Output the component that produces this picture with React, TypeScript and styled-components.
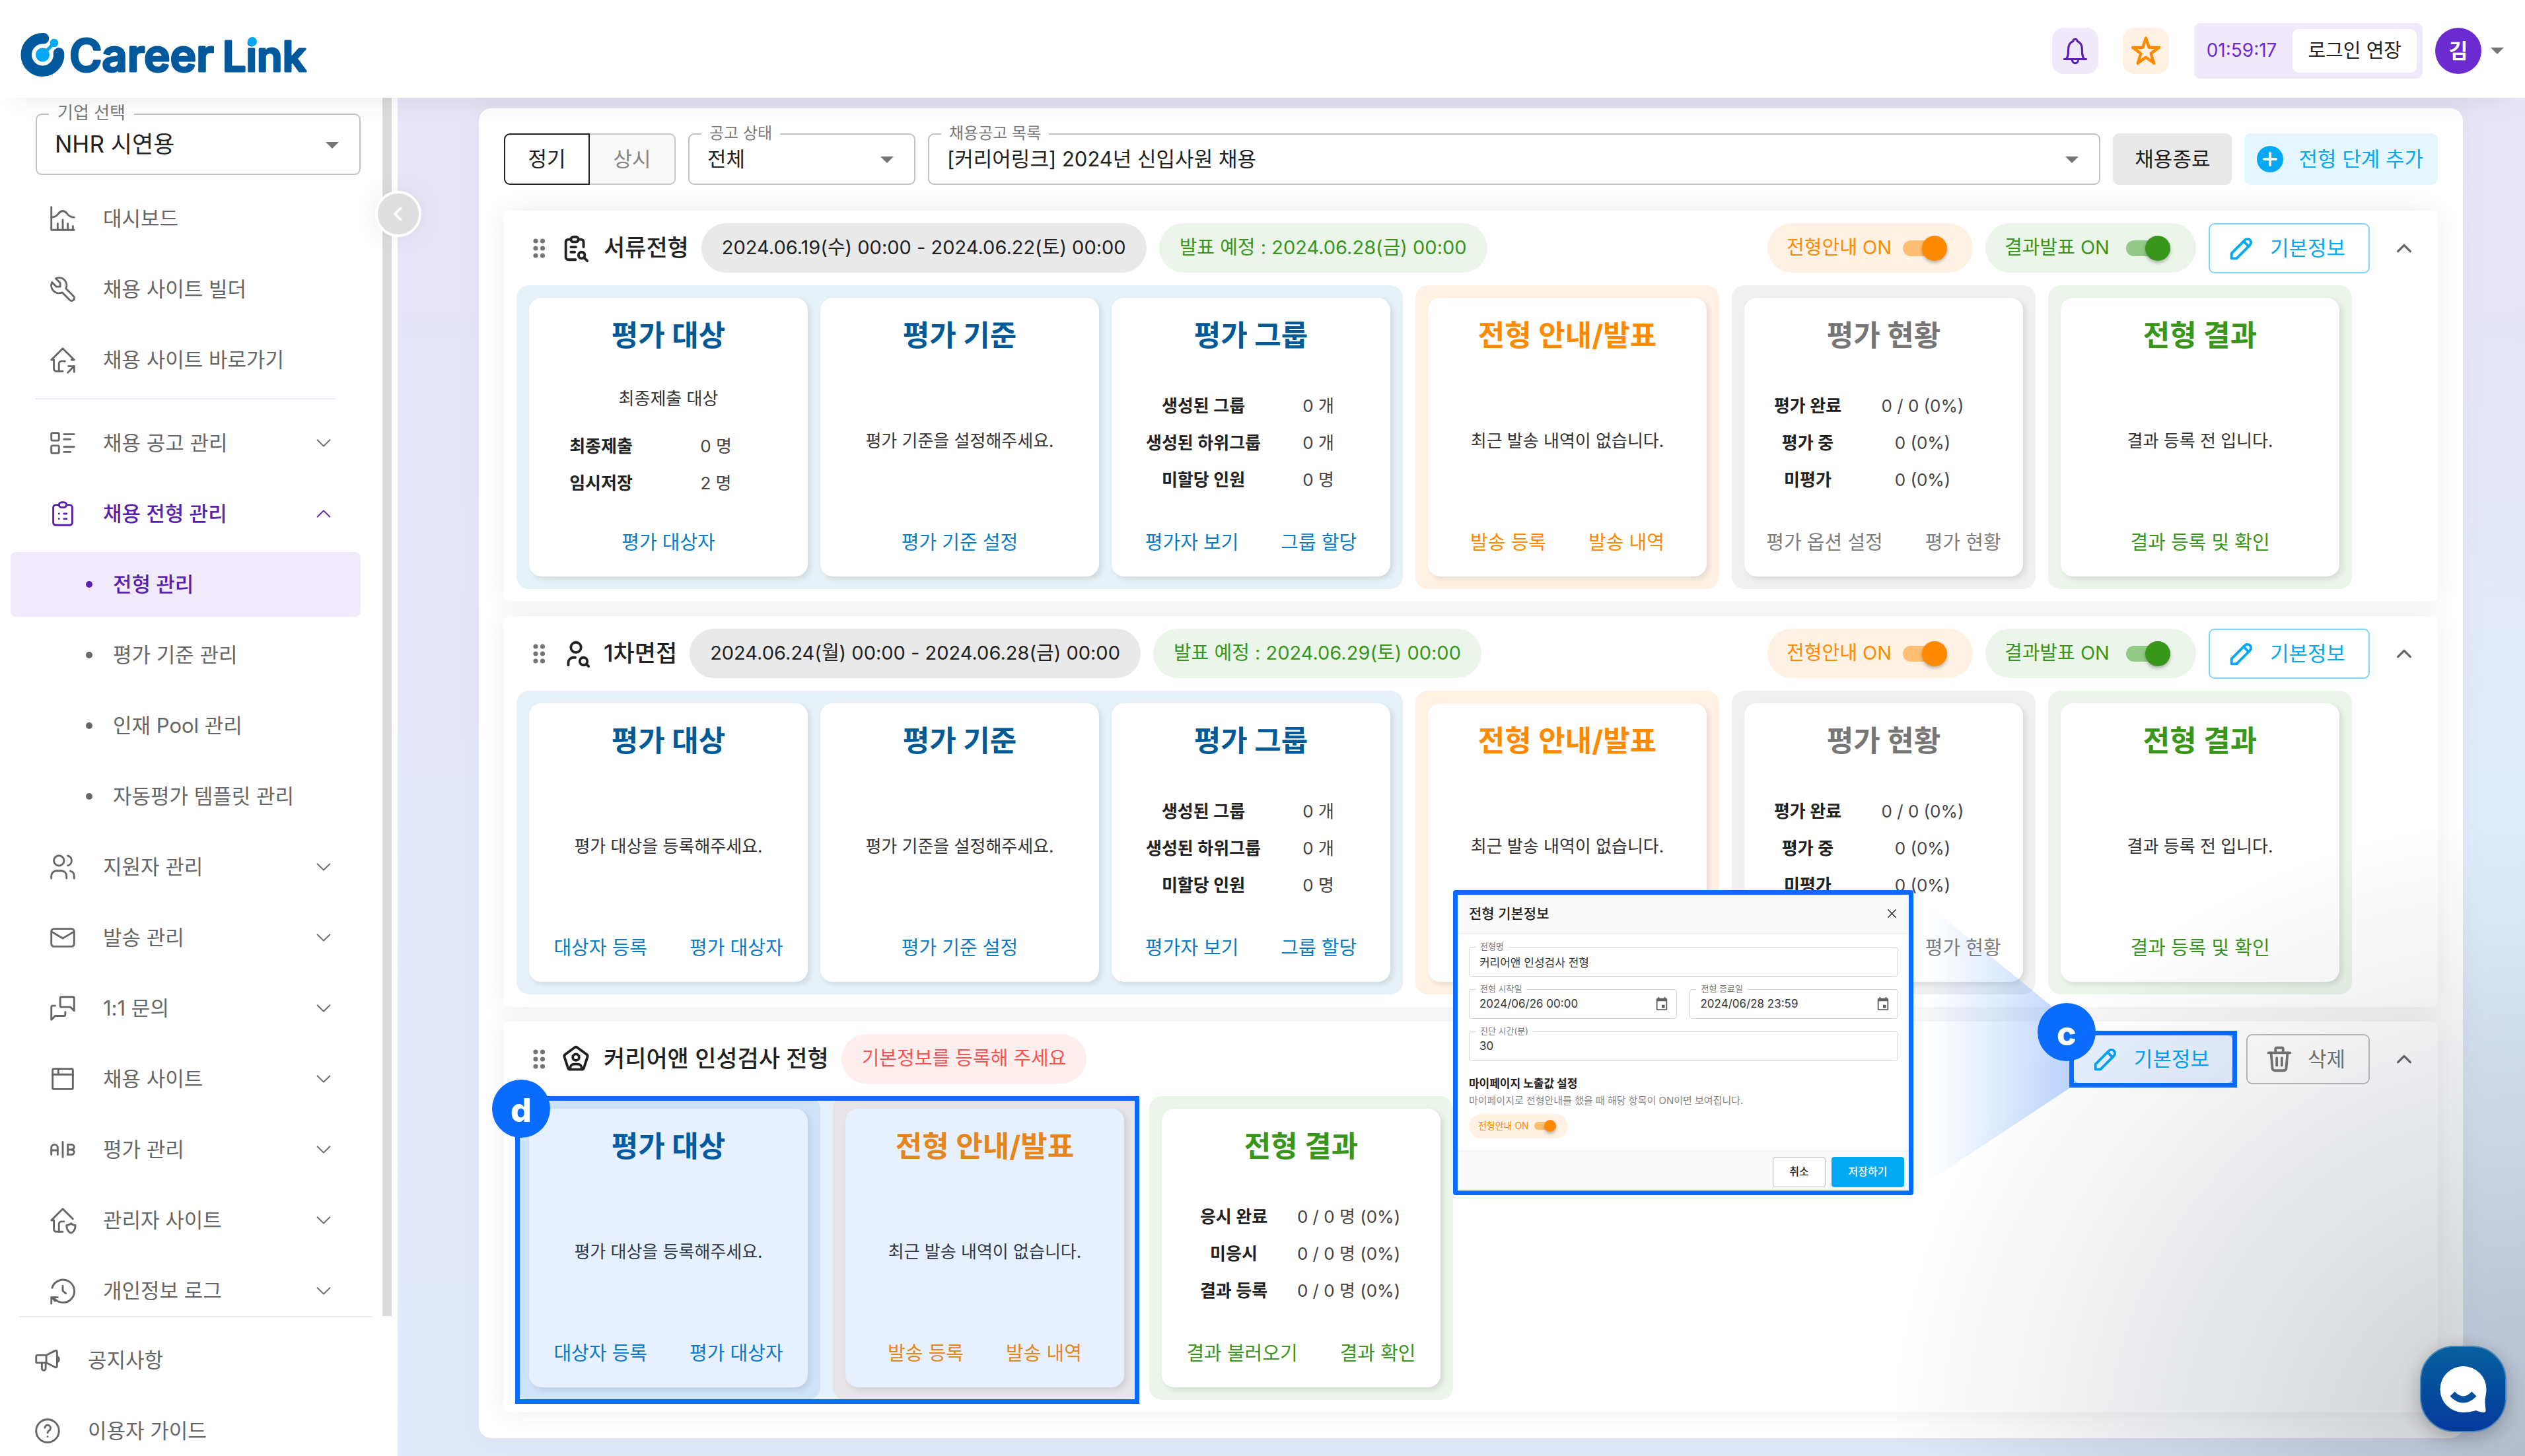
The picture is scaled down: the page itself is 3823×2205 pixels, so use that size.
import React from "react";
import styled, { createGlobalStyle, css } from "styled-components";

const GlobalStyle = createGlobalStyle`
  *, *::before, *::after { box-sizing: border-box; }
  body {
    margin: 0;
    font-family: Inter, "Noto Sans CJK KR", sans-serif;
    line-height: 1.4;
    color: #212121;
    background: #fff;
  }
  button, input, select { font: inherit; color: inherit; margin: 0; }
  button { background: none; border: 0; padding: 0; cursor: pointer; white-space: nowrap; }
  a { color: inherit; text-decoration: none; }
  ul { list-style: none; margin: 0; padding: 0; }
  h1, h2, h3, p { margin: 0; }
`;

/* ---------- icons ---------- */

const PATHS: Record<string, string[]> = {
  chart: ["M3 3v18h18", "M20 18v3", "M16 16v5", "M12 13v8", "M8 16v5", "M3 11c6 0 5-5 9-5s3 5 9 5"],
  tool: ["M7 10h3V7L6.500 3.500a6 6 0 0 1 8 8l6 6a2 2 0 0 1-3 3l-6-6a6 6 0 0 1-8-8L7 10"],
  homeShare: [
    "M9 21v-6a2 2 0 0 1 2-2h2c.25 0 .48.05.7.13",
    "M19 12h2l-9-9-9 9h2v7a2 2 0 0 0 2 2h5",
    "M16 22l5-5",
    "M21 21.500V17h-4.500",
  ],
  list: [
    "M13 5h8", "M13 9h5", "M13 15h8", "M13 19h5",
    "M3 5a1 1 0 0 1 1-1h4a1 1 0 0 1 1 1v4a1 1 0 0 1-1 1H4a1 1 0 0 1-1-1z",
    "M3 15a1 1 0 0 1 1-1h4a1 1 0 0 1 1 1v4a1 1 0 0 1-1 1H4a1 1 0 0 1-1-1z",
  ],
  clipboard: [
    "M9 5H6.500a2 2 0 0 0-2 2v12a2 2 0 0 0 2 2h11a2 2 0 0 0 2-2V7a2 2 0 0 0-2-2H15",
    "M9 5a2 2 0 0 1 2-2h2a2 2 0 0 1 2 2 2 2 0 0 1-2 2h-2a2 2 0 0 1-2-2z",
    "M9 12h.01", "M13 12h2", "M9 16h.01", "M13 16h2",
  ],
  users: [
    "M5 7a4 4 0 1 0 8 0a4 4 0 1 0-8 0",
    "M3 21v-2a4 4 0 0 1 4-4h4a4 4 0 0 1 4 4v2",
    "M16 3.130a4 4 0 0 1 0 7.750",
    "M21 21v-2a4 4 0 0 0-3-3.850",
  ],
  mail: ["M3 7a2 2 0 0 1 2-2h14a2 2 0 0 1 2 2v10a2 2 0 0 1-2 2H5a2 2 0 0 1-2-2z", "M3.500 7.500L12 12.500l8.500-5"],
  messages: [
    "M21 14l-3-3h-7a1 1 0 0 1-1-1V4a1 1 0 0 1 1-1h9a1 1 0 0 1 1 1z",
    "M14 15v2a1 1 0 0 1-1 1H6l-3 3V11a1 1 0 0 1 1-1h2",
  ],
  window: ["M4 5a1 1 0 0 1 1-1h14a1 1 0 0 1 1 1v14a1 1 0 0 1-1 1H5a1 1 0 0 1-1-1z", "M4 8.500h16", "M8.500 4v4"],
  ab: [
    "M3 16v-5.500a2.500 2.500 0 0 1 5 0V16",
    "M3 12.500h5",
    "M12 6v12",
    "M16 16V8h3a2 2 0 0 1 0 4h-3",
    "M19 12a2 2 0 0 1 0 4h-3",
  ],
  homeShield: [
    "M9 21v-6a2 2 0 0 1 2-2h2",
    "M20 11l-8-8-9 9h2v7a2 2 0 0 0 2 2h5",
    "M22 16c0 4-2.500 6-3.500 6S15 20 15 16c1 0 2.500-.500 3.500-1.500 1 1 2.500 1.500 3.500 1.500z",
  ],
  history: ["M12 8v4l2.500 2", "M3.600 9.500A9 9 0 1 1 5 17.600", "M3 22v-5h5", "M3.200 17.200L6 20"],
  speaker: [
    "M3 9a1 1 0 0 1 1-1h7v6H4a1 1 0 0 1-1-1z",
    "M11 8l7-3.500a1 1 0 0 1 1.500 1v11a1 1 0 0 1-1.500 1L11 14",
    "M19.500 9a2.400 2.400 0 0 1 0 4.500",
    "M7.500 14v4.500a1.500 1.500 0 0 0 3 0V14",
  ],
  help: ["M3 12a9 9 0 1 0 18 0a9 9 0 1 0-18 0", "M12 16.500v.01", "M9.800 9.500a2.300 2.300 0 1 1 3.400 2.200c-.800.500-1.200.900-1.200 1.800"],
  clipboardSearch: [
    "M8 5H6a2 2 0 0 0-2 2v12a2 2 0 0 0 2 2h5.700",
    "M18 11V7a2 2 0 0 0-2-2h-2",
    "M8 5a2 2 0 0 1 2-2h2a2 2 0 0 1 2 2 2 2 0 0 1-2 2h-2a2 2 0 0 1-2-2z",
    "M8 11h4", "M8 15h3",
    "M14 17.500a2.500 2.500 0 1 0 5 0a2.500 2.500 0 1 0-5 0",
    "M18.500 19.500L21 22",
  ],
  userSearch: [
    "M8 7a4 4 0 1 0 8 0a4 4 0 1 0-8 0",
    "M6 21v-2a4 4 0 0 1 4-4h1.500",
    "M15 18a3 3 0 1 0 6 0a3 3 0 1 0-6 0",
    "M20.200 20.200L22 22",
  ],
  userPentagon: [
    "M13.160 2.900l7.170 5.240c.700.510 1 1.430.730 2.260l-2.740 8.430a1.950 1.950 0 0 1-1.860 1.350H7.540a1.950 1.950 0 0 1-1.860-1.350L2.940 10.400a1.980 1.980 0 0 1 .730-2.260l7.170-5.240a1.970 1.970 0 0 1 2.320 0z",
    "M9.500 10.500a2.500 2.500 0 1 0 5 0a2.500 2.500 0 1 0-5 0",
    "M7.500 20v-1a3 3 0 0 1 3-3h3a3 3 0 0 1 3 3v1",
  ],
  pencil: ["M4 20h4L18.500 9.500a2.830 2.830 0 1 0-4-4L4 16z", "M13.500 6.500l4 4"],
  trash: ["M3.500 7h17", "M10 11v6", "M14 11v6", "M5.500 7l1 12a2 2 0 0 0 2 2h7a2 2 0 0 0 2-2l1-12", "M9 7V4a1 1 0 0 1 1-1h4a1 1 0 0 1 1 1v3"],
  down: ["M5 8.500l7 7 7-7"],
  up: ["M5 15.500l7-7 7 7"],
  left: ["M15 5l-7 7 7 7"],
  close: ["M4 4l16 16", "M20 4L4 20"],
  star: ["M12 3l2.200 6.700h7l-5.700 4.200 2.200 6.800L12 16.500l-5.700 4.200 2.200-6.800-5.700-4.200h7z"],
  bell: ["M4 18h16", "M5.500 18c1.500-2 1.500-4 1.500-7 0-4 2-5.500 3.500-6a1.500 1.500 0 0 1 3 0C15 5.500 17 7 17 11c0 3 0 5 1.500 7", "M9.800 18.500a2.200 2.500 0 0 0 4.400 0"],
};

const Icon = ({ name, size = 46, stroke = 1.5 }: { name: string; size?: number; stroke?: number }) => (
  <svg
    width={size}
    height={size}
    viewBox="0 0 24 24"
    fill="none"
    stroke="currentColor"
    strokeWidth={stroke}
    strokeLinecap="round"
    strokeLinejoin="round"
    aria-hidden="true"
  >
    {PATHS[name].map((d) => (
      <path key={d} d={d} />
    ))}
  </svg>
);

const Caret = styled.span`
  flex: none;
  width: 0;
  height: 0;
  border: 10px solid transparent;
  border-top-color: #757575;
  border-bottom: 0;
`;

/* ---------- header ---------- */

const Header = styled.header`
  position: relative;
  z-index: 3;
  display: flex;
  align-items: center;
  flex: none;
  height: 148px;
  padding: 6px 32px 0 30px;
  background: #fff;
  box-shadow: 0 30px 40px -30px rgba(0, 0, 0, 0.11);
`;

const LogoLink = styled.a`
  display: block;
  margin-right: auto;
  line-height: 0;
`;

const HeaderTools = styled.div`
  display: flex;
  align-items: center;
  gap: 19px;
`;

const SquareButtons = styled.div`
  display: flex;
  gap: 37px;
  margin-right: 19px;
`;

const SquareButton = styled.button<{ $bg: string; $fg: string }>`
  display: grid;
  place-items: center;
  width: 70px;
  height: 70px;
  border-radius: 18px;
  background: ${(p) => p.$bg};
  color: ${(p) => p.$fg};
`;

const Session = styled.div`
  display: flex;
  align-items: center;
  gap: 24px;
  height: 84px;
  padding: 0 9px 0 19px;
  border-radius: 9px;
  background: #f0e9fa;
  color: #6c2bd4;
  font-size: 28px;
`;

const ExtendButton = styled.button`
  height: 66px;
  padding: 0 23px;
  border-radius: 9px;
  background: #fff;
  color: #212121;
  font-size: 29px;
`;

const Account = styled.button`
  display: flex;
  align-items: center;
  gap: 14px;
`;

const Avatar = styled.span`
  display: grid;
  place-items: center;
  width: 70px;
  height: 70px;
  border-radius: 50%;
  background: #6b2bd0;
  color: #fff;
  font-size: 31px;
  font-weight: 700;
`;

/* ---------- sidebar ---------- */

const Shell = styled.div`
  display: flex;
  flex-direction: column;
  height: 100vh;
  overflow: hidden;

  svg { flex: none; }
`;

const Columns = styled.div`
  display: flex;
  flex: 1;
  min-height: 0;
`;

const Sidebar = styled.aside`
  position: relative;
  z-index: 2;
  display: flex;
  flex-direction: column;
  flex: none;
  width: 602px;
  background: #fff;
`;

const NavScroll = styled.div`
  flex: 1;
  min-height: 0;
  overflow: hidden;
  margin-right: 9px;
  padding: 24px 33px 0 16px;
  border-right: 14px solid #dcdcdc;
`;

const NavList = styled.ul`
  display: flex;
  flex-direction: column;
  gap: 9px;
`;

const navRow = css<{ $active?: boolean }>`
  display: flex;
  align-items: center;
  width: 100%;
  height: 98px;
  border-radius: 8px;
  font-size: 31px;
  text-align: left;
  color: ${(p) => (p.$active ? "#5a1fb0" : "#666")};
`;

const NavButton = styled.button<{ $active?: boolean }>`
  ${navRow}
  gap: 38px;
  padding: 0 40px 0 56px;
  font-weight: ${(p) => (p.$active ? 500 : 400)};

  & > svg:last-child { margin-left: auto; }
`;

const NavLink = styled.a<{ $compact?: boolean }>`
  ${navRow}
  gap: 38px;
  padding: 0 0 0 ${(p) => (p.$compact ? 19 : 56)}px;
`;

const SubLink = styled.a<{ $active?: boolean }>`
  ${navRow}
  gap: 31px;
  padding-left: 114px;
  font-weight: ${(p) => (p.$active ? 500 : 400)};
  background: ${(p) => (p.$active ? "#f1eafb" : "none")};

  &::before {
    content: "";
    width: 10px;
    height: 10px;
    border-radius: 50%;
    background: currentColor;
  }
`;

const NavDivider = styled.li`
  height: 2px;
  margin: 0 38px 8px;
  background: #efebfb;
`;

const SidebarFoot = styled.ul`
  display: flex;
  flex-direction: column;
  gap: 9px;
  height: 212px;
  margin: 0 38px 0 30px;
  padding: 16px 0 0;
  border-top: 2px solid #efebfb;
`;

const CollapseButton = styled.button`
  position: absolute;
  top: 141px;
  right: -36px;
  display: grid;
  place-items: center;
  width: 70px;
  height: 70px;
  border: 4px solid #fff;
  border-radius: 50%;
  background: #dedede;
  color: #fff;
  box-shadow: 0 0 38px rgba(0, 0, 0, 0.08);
`;

/* ---------- outlined fields ---------- */

const FieldBox = styled.div<{ $grow?: boolean; $width?: number; $h: number; $edge: string; $radius?: number }>`
  position: relative;
  display: flex;
  align-items: center;
  flex: ${(p) => (p.$grow ? "1" : "none")};
  width: ${(p) => (p.$width ? `${p.$width}px` : "auto")};
  min-width: 0;
  height: ${(p) => p.$h}px;
  border: 2px solid ${(p) => p.$edge};
  border-radius: ${(p) => p.$radius ?? 9}px;
  background: #fff;
`;

const FieldLabel = styled.label<{ $size: number; $left: number }>`
  position: absolute;
  top: 0;
  left: ${(p) => p.$left}px;
  padding: 0 ${(p) => Math.round(p.$size / 2)}px;
  background: #fff;
  color: #7a7a7a;
  font-size: ${(p) => p.$size}px;
  line-height: 1;
  transform: translateY(-60%);
  white-space: nowrap;
`;

const SelectInput = styled.select<{ $size: number }>`
  flex: 1;
  width: 100%;
  height: 100%;
  padding: 0 30px 0 27px;
  border: 0;
  outline: 0;
  appearance: none;
  background: transparent;
  font-size: ${(p) => p.$size}px;
`;

const SelectCaret = styled(Caret)`
  position: absolute;
  right: 31px;
  top: 50%;
  margin-top: -4px;
  pointer-events: none;
`;

const SelectField = ({ id, label, value, size = 31, labelSize = 24, height = 78, width, grow }: any) => (
  <FieldBox $grow={grow} $width={width} $h={height} $edge="#c2c2c2">
    <SelectInput id={id} $size={size} defaultValue={value}>
      <option>{value}</option>
    </SelectInput>
    <FieldLabel htmlFor={id} $size={labelSize} $left={18}>{label}</FieldLabel>
    <SelectCaret />
  </FieldBox>
);

const CompanyPicker = styled.div`
  margin: 0 0 17px 38px;
`;

/* ---------- main ---------- */

const Main = styled.main`
  flex: 1;
  min-width: 0;
  padding: 16px 94px 26px 123px;
  background:
    radial-gradient(ellipse at 100% 60%, #e0eefe 0, rgba(224, 238, 254, 0) 45%),
    linear-gradient(180deg, #e8e5f7 0, #e5e8fa 50%, #e2eafa 100%);
`;

const Panel = styled.div`
  display: flex;
  flex-direction: column;
  padding: 38px 38px 39px;
  border-radius: 19px;
  background: #fff;
  box-shadow: 0 0 38px rgba(0, 0, 0, 0.05);
`;

const Toolbar = styled.div`
  display: flex;
  gap: 19px;
  margin-bottom: 39px;
`;

const Segmented = styled.div`
  display: flex;
`;

const Segment = styled.button<{ $on?: boolean }>`
  width: 130px;
  height: 78px;
  border: 2px solid ${(p) => (p.$on ? "#212121" : "#c9c9c9")};
  border-left-width: ${(p) => (p.$on ? 2 : 0)}px;
  border-radius: ${(p) => (p.$on ? "9px 0 0 9px" : "0 9px 9px 0")};
  background: ${(p) => (p.$on ? "#fff" : "#f9f9f9")};
  color: ${(p) => (p.$on ? "#212121" : "#858585")};
  font-size: 31px;
`;

const FilledButton = styled.button<{ $bg: string; $fg: string }>`
  display: flex;
  align-items: center;
  gap: 23px;
  height: 78px;
  padding: 0 22px 0 19px;
  border-radius: 9px;
  background: ${(p) => p.$bg};
  color: ${(p) => p.$fg};
  font-size: 31px;
`;

const CloseJobButton = styled(FilledButton)`
  padding: 0 33px;
`;

const Sections = styled.div`
  display: flex;
  flex-direction: column;
  gap: 22px;
`;

const Section = styled.section`
  display: flex;
  flex-direction: column;
  gap: 19px;
  padding: 19px;
  border-radius: 8px;
  background: #fff;
  box-shadow: 0 0 38px rgba(0, 0, 0, 0.07);

  &:last-child { position: relative; z-index: 1; }
`;

const SectionHead = styled.div`
  display: flex;
  align-items: center;
  gap: 19px;
  height: 75px;
`;

const SectionName = styled.div`
  display: flex;
  align-items: center;
`;

const SectionTitle = styled.h2`
  margin-left: 19px;
  font-size: 35px;
  font-weight: 500;
  white-space: nowrap;
`;

const Handle = styled.button`
  display: grid;
  place-items: center;
  width: 67px;
  height: 46px;
  cursor: grab;
`;

const Chip = styled.span<{ $bg: string; $fg: string }>`
  display: flex;
  align-items: center;
  height: 75px;
  padding: 0 31px;
  border-radius: 38px;
  background: ${(p) => p.$bg};
  color: ${(p) => p.$fg};
  font-size: 29px;
  white-space: nowrap;
`;

const HeadActions = styled.div`
  display: flex;
  align-items: center;
  gap: 19px;
  margin-left: auto;
`;

const SwitchPill = styled.label<{ $bg: string; $fg: string; $gap: number }>`
  display: flex;
  align-items: center;
  gap: ${(p) => p.$gap}px;
  height: 75px;
  padding: 0 39px 0 29px;
  border-radius: 38px;
  background: ${(p) => p.$bg};
  color: ${(p) => p.$fg};
  font-size: 29px;
  white-space: nowrap;
`;

const Switch = styled.input<{ $track: string; $thumb: string; $d: number; $w: number }>`
  appearance: none;
  display: flex;
  align-items: center;
  justify-content: flex-end;
  width: ${(p) => p.$w}px;
  height: ${(p) => Math.round(p.$d * 0.64)}px;
  border-radius: ${(p) => p.$d}px;
  background: ${(p) => p.$track};

  &::before {
    content: "";
    width: ${(p) => p.$d}px;
    height: ${(p) => p.$d}px;
    border-radius: 50%;
    background: ${(p) => p.$thumb};
    box-shadow: 0 3px 5px rgba(0, 0, 0, 0.28);
  }
`;

const OutlineButton = styled.button<{ $edge: string; $fg: string }>`
  display: flex;
  align-items: center;
  gap: 20px;
  height: 76px;
  padding: 0 35px 0 25px;
  border: 2px solid ${(p) => p.$edge};
  border-radius: 9px;
  color: ${(p) => p.$fg};
  font-size: 31px;
`;

const FoldButton = styled.button`
  display: grid;
  place-items: center;
  width: 65px;
  height: 65px;
  color: #666;
`;

const Board = styled.div`
  display: flex;
  align-items: flex-start;
  gap: 19px;
`;

type Tone = "blue" | "orange" | "gray" | "green";
const TONES: Record<Tone, { group: string; title: string; link: string }> = {
  blue: { group: "#e6f1f8", title: "#005a98", link: "#0a7cc4" },
  orange: { group: "#fff2e5", title: "#ff8a00", link: "#ff8a00" },
  gray: { group: "#f0f0f0", title: "#767676", link: "#7d7d7d" },
  green: { group: "#ebf5ea", title: "#38961b", link: "#38961b" },
};

const Group = styled.div<{ $tone: Tone }>`
  display: flex;
  gap: 19px;
  padding: 19px;
  border-radius: 19px;
  background: ${(p) => TONES[p.$tone].group};
`;

const Card = styled.article`
  display: flex;
  flex-direction: column;
  width: 422px;
  height: 422px;
  padding: 19px 0;
  border-radius: 19px;
  background: #fff;
  box-shadow: 4px 4px 8px rgba(0, 0, 0, 0.1);
`;

const CardTitle = styled.h3<{ $tone: Tone }>`
  color: ${(p) => TONES[p.$tone].title};
  font-size: 44px;
  font-weight: 700;
  line-height: 76px;
  text-align: center;
`;

const CardBody = styled.div`
  display: flex;
  flex-direction: column;
  justify-content: center;
  gap: 10px;
  flex: 1;
`;

const Message = styled.p`
  font-size: 26px;
  line-height: 56px;
  text-align: center;
  color: #333;
  white-space: nowrap;
`;

const Stats = styled.table<{ $indent: number }>`
  width: 348px;
  margin: 6px 0 0 ${(p) => p.$indent}px;
  border-collapse: collapse;
  table-layout: fixed;
  font-size: 26px;
  text-align: center;
  white-space: nowrap;

  th, td { height: 56px; padding: 0; line-height: 56px; }
  th { font-weight: 600; color: #212121; }
  td { color: #444; }
`;

const CardLinks = styled.div<{ $tone: Tone }>`
  display: flex;
  justify-content: center;
  gap: 64px;
  height: 64px;
  color: ${(p) => TONES[p.$tone].link};
  font-size: 29px;
  line-height: 64px;
`;

type StageCard = {
  tone: Tone;
  title: string;
  text?: string;
  rows?: [string, string][];
  indent?: number;
  links: string[];
};

const StageCardView = ({ card }: { card: StageCard }) => (
  <Card>
    <CardTitle $tone={card.tone}>{card.title}</CardTitle>
    <CardBody>
      {card.text && <Message>{card.text}</Message>}
      {card.rows && (
        <Stats $indent={card.indent ?? 0}>
          <tbody>
            {card.rows.map(([name, value]) => (
              <tr key={name}>
                <th scope="row">{name}</th>
                <td>{value}</td>
              </tr>
            ))}
          </tbody>
        </Stats>
      )}
    </CardBody>
    <CardLinks $tone={card.tone}>
      {card.links.map((l) => (
        <a key={l} href="#">{l}</a>
      ))}
    </CardLinks>
  </Card>
);

const CardGroup = ({ cards }: { cards: StageCard[] }) => (
  <Group $tone={cards[0].tone}>
    {cards.map((c) => (
      <StageCardView key={c.title} card={c} />
    ))}
  </Group>
);

/* ---------- guide marks ---------- */

const GUIDE = "#0a6cff";

const Marked = styled.div<{ $inset: string }>`
  position: relative;
  display: flex;
  gap: 19px;

  &::after {
    content: "";
    position: absolute;
    inset: ${(p) => p.$inset};
    border: 7px solid ${GUIDE};
    background: rgba(5, 105, 255, 0.1);
    pointer-events: none;
  }
`;

const Mark = styled.span<{ $left: number; $top: number }>`
  position: absolute;
  z-index: 2;
  left: ${(p) => p.$left}px;
  top: ${(p) => p.$top}px;
  width: 88px;
  height: 88px;
  padding-top: 6px;
  border-radius: 50%;
  background: ${GUIDE};
  color: #fff;
  font-size: 50px;
  font-weight: 800;
  line-height: 80px;
  text-align: center;
`;

const Beam = styled.svg`
  position: absolute;
  right: 100%;
  top: -215px;
  width: 242px;
  height: 454px;
  pointer-events: none;
`;

const Dialog = styled.div`
  position: absolute;
  z-index: 3;
  right: 485px;
  top: -218px;
  display: flex;
  flex-direction: column;
  width: 697px;
  border: 7px solid ${GUIDE};
  border-radius: 4px;
  background: #fff;
`;

const DialogHead = styled.div`
  display: flex;
  align-items: center;
  justify-content: space-between;
  height: 60px;
  padding: 0 17px;
  border-bottom: 2px solid #f2f2f2;
  background: #fafafa;
  font-size: 21px;
  font-weight: 500;
`;

const DialogBody = styled.div`
  display: flex;
  flex-direction: column;
  gap: 19px;
  height: 327px;
  padding: 19px 16px 0 17px;
`;

const DialogRow = styled.div`
  display: flex;
  gap: 19px;
`;

const DialogField = styled(FieldBox)`
  flex: 1;
  border-width: 1px;
  padding-right: 11px;
  color: #5f5f5f;
`;

const DialogInput = styled.input`
  flex: 1;
  min-width: 0;
  height: 100%;
  padding: 0 0 0 15px;
  border: 0;
  outline: 0;
  background: transparent;
  color: #333;
  font-size: 17px;
`;

const DialogNote = styled.div`
  display: flex;
  flex-direction: column;
  align-items: flex-start;
  padding-top: 2px;
  font-size: 17px;
  line-height: 26px;

  h3 { font-size: 17px; font-weight: 700; }
  p { margin-bottom: 7px; color: #858585; font-size: 15px; }
`;

const SmallPill = styled(SwitchPill)`
  height: 37px;
  padding: 0 18px 0 14px;
  font-size: 14px;
`;

const DialogFoot = styled.div`
  display: flex;
  justify-content: flex-end;
  gap: 9px;
  padding: 8px 7px 5px;
  border-top: 2px solid #f2f2f2;
  background: #fafafa;
`;

const DialogButton = styled.button<{ $primary?: boolean }>`
  width: ${(p) => (p.$primary ? 110 : 80)}px;
  height: 46px;
  border: 1px solid ${(p) => (p.$primary ? "#03a9f4" : "#bdbdbd")};
  border-radius: 4px;
  background: ${(p) => (p.$primary ? "#03a9f4" : "#fff")};
  color: ${(p) => (p.$primary ? "#fff" : "#212121")};
  font-size: 16px;
  font-weight: 500;
`;

const IconButton = styled.button`
  display: grid;
  place-items: center;
`;

const CalendarIcon = () => (
  <svg width="22" height="22" viewBox="0 0 24 24" fill="currentColor" aria-hidden="true">
    <path d="M19 3h-1V1h-2v2H8V1H6v2H5a2 2 0 0 0-2 2v16a2 2 0 0 0 2 2h14a2 2 0 0 0 2-2V5a2 2 0 0 0-2-2zm0 18H5V8h14v13zM12 14h5v5h-5z" />
  </svg>
);

const TextField = ({ id, label, value, calendar }: { id: string; label: string; value: string; calendar?: boolean }) => (
  <DialogField $h={45} $edge="#d4d4d4" $radius={4}>
    <DialogInput id={id} type="text" defaultValue={value} />
    <FieldLabel htmlFor={id} $size={13} $left={9}>{label}</FieldLabel>
    {calendar && (
      <IconButton type="button" aria-label={`${label} 달력`}>
        <CalendarIcon />
      </IconButton>
    )}
  </DialogField>
);

const InfoDialog = () => (
  <Dialog role="dialog" aria-label="전형 기본정보">
    <DialogHead>
      <span>전형 기본정보</span>
      <IconButton type="button" aria-label="닫기"><Icon name="close" size={17} stroke={2} /></IconButton>
    </DialogHead>
    <DialogBody>
      <DialogRow><TextField id="stage-name" label="전형명" value="커리어앤 인성검사 전형" /></DialogRow>
      <DialogRow>
        <TextField id="stage-start" label="전형 시작일" value="2024/06/26 00:00" calendar />
        <TextField id="stage-end" label="전형 종료일" value="2024/06/28 23:59" calendar />
      </DialogRow>
      <DialogRow><TextField id="stage-minutes" label="진단 시간(분)" value="30" /></DialogRow>
      <DialogNote>
        <h3>마이페이지 노출값 설정</h3>
        <p>마이페이지로 전형안내를 했을 때 해당 항목이 ON이면 보여집니다.</p>
        <SmallPill $bg="#fff2e5" $fg="#ff8a00" $gap={8}>
          전형안내 ON
          <Switch type="checkbox" role="switch" defaultChecked $track="#ffbf73" $thumb="#ff8a00" $d={18} $w={33} />
        </SmallPill>
      </DialogNote>
    </DialogBody>
    <DialogFoot>
      <DialogButton type="button">취소</DialogButton>
      <DialogButton type="button" $primary>저장하기</DialogButton>
    </DialogFoot>
  </Dialog>
);

/* ---------- chat launcher ---------- */

const ChatShade = styled.div`
  position: absolute;
  z-index: 4;
  right: 0;
  bottom: 0;
  width: 950px;
  height: 950px;
  background: radial-gradient(ellipse at bottom right, rgba(29, 39, 54, 0.23) 0, rgba(29, 39, 54, 0) 72%);
  pointer-events: none;
`;

const ChatButton = styled.button`
  position: absolute;
  z-index: 5;
  right: 28px;
  bottom: 36px;
  width: 131px;
  height: 131px;
  border: 2px solid #4b86b8;
  border-radius: 52px;
  background: linear-gradient(180deg, #055f9e, #053a9c);
  box-shadow: 0 8px 30px rgba(0, 0, 0, 0.25);
  line-height: 0;
`;

/* ---------- data ---------- */

const TOP_MENU = [
  { icon: "chart", name: "대시보드" },
  { icon: "tool", name: "채용 사이트 빌더" },
  { icon: "homeShare", name: "채용 사이트 바로가기" },
];
const SUB_MENU = ["전형 관리", "평가 기준 관리", "인재 Pool 관리", "자동평가 템플릿 관리"];
const MENU = [
  { icon: "users", name: "지원자 관리" },
  { icon: "mail", name: "발송 관리" },
  { icon: "messages", name: "1:1 문의" },
  { icon: "window", name: "채용 사이트" },
  { icon: "ab", name: "평가 관리" },
  { icon: "homeShield", name: "관리자 사이트" },
  { icon: "history", name: "개인정보 로그" },
];

const SUBMITTED: StageCard = {
  tone: "blue", title: "평가 대상", text: "최종제출 대상",
  rows: [["최종제출", "0 명"], ["임시저장", "2 명"]], indent: 22, links: ["평가 대상자"],
};
const TARGETS: StageCard = { tone: "blue", title: "평가 대상", text: "평가 대상을 등록해주세요.", links: ["대상자 등록", "평가 대상자"] };
const CRITERIA: StageCard = { tone: "blue", title: "평가 기준", text: "평가 기준을 설정해주세요.", links: ["평가 기준 설정"] };
const GROUPS: StageCard = {
  tone: "blue", title: "평가 그룹",
  rows: [["생성된 그룹", "0 개"], ["생성된 하위그룹", "0 개"], ["미할당 인원", "0 명"]], indent: 52,
  links: ["평가자 보기", "그룹 할당"],
};
const NOTICE: StageCard = { tone: "orange", title: "전형 안내/발표", text: "최근 발송 내역이 없습니다.", links: ["발송 등록", "발송 내역"] };
const STATUS: StageCard = {
  tone: "gray", title: "평가 현황",
  rows: [["평가 완료", "0 / 0 (0%)"], ["평가 중", "0 (0%)"], ["미평가", "0 (0%)"]], indent: 9,
  links: ["평가 옵션 설정", "평가 현황"],
};
const RESULT: StageCard = { tone: "green", title: "전형 결과", text: "결과 등록 전 입니다.", links: ["결과 등록 및 확인"] };
const TEST_RESULT: StageCard = {
  tone: "green", title: "전형 결과",
  rows: [["응시 완료", "0 / 0 명 (0%)"], ["미응시", "0 / 0 명 (0%)"], ["결과 등록", "0 / 0 명 (0%)"]], indent: 22,
  links: ["결과 불러오기", "결과 확인"],
};

/* ---------- composed parts ---------- */

const Logo = () => (
  <svg width="440" height="120" viewBox="0 -20 440 120" role="img" aria-label="CareerLink">
    <path d="M36 21.300A24.700 24.700 0 1 0 59 43.500" fill="none" stroke="#00599d" strokeWidth="16.500" strokeLinecap="round" />
    <path d="M34.500 46L52 28" stroke="#03a9f4" strokeWidth="5" />
    <circle cx="34.500" cy="46" r="10.500" fill="#03a9f4" />
    <circle cx="52" cy="28" r="6.300" fill="#03a9f4" />
    <g fill="#00599d" stroke="#00599d" strokeWidth="3" strokeLinejoin="round" fontFamily="Inter, sans-serif" fontWeight="600">
      <text x="75" y="71" fontSize="67">Career</text>
      <text x="307" y="71" fontSize="63">Link</text>
    </g>
    <circle cx="352" cy="26" r="7" fill="#03a9f4" />
  </svg>
);

const DragHandle = () => (
  <Handle type="button" aria-label="순서 변경">
    <svg width="20" height="32" viewBox="0 0 20 32" fill="#757575" aria-hidden="true">
      {[5, 16, 27].map((y) => [5, 15.500].map((x) => <circle key={`${x}-${y}`} cx={x} cy={y} r="3.600" />))}
    </svg>
  </Handle>
);

const StageHead = ({ icon, title, children }: { icon: string; title: string; children: React.ReactNode }) => (
  <SectionHead>
    <SectionName>
      <DragHandle />
      <Icon name={icon} stroke={2} />
      <SectionTitle>{title}</SectionTitle>
    </SectionName>
    {children}
  </SectionHead>
);

const Fold = () => (
  <FoldButton type="button" aria-label="접기"><Icon name="up" size={32} stroke={2.500} /></FoldButton>
);

const InfoButton = () => (
  <OutlineButton type="button" $edge="#81d4fa" $fg="#03a9f4">
    <Icon name="pencil" stroke={2} />
    기본정보
  </OutlineButton>
);

const Stage = ({ icon, title, period, notice, first }: { icon: string; title: string; period: string; notice: string; first: StageCard }) => (
  <Section>
    <StageHead icon={icon} title={title}>
      <Chip $bg="#e9e9e9" $fg="#212121">{period}</Chip>
      <Chip $bg="#ebf5ea" $fg="#38961b">{notice}</Chip>
      <HeadActions>
        <SwitchPill $bg="#fff2e5" $fg="#ff8a00" $gap={17}>
          전형안내 ON
          <Switch type="checkbox" role="switch" defaultChecked $track="#ffbf73" $thumb="#ff8a00" $d={38} $w={67} />
        </SwitchPill>
        <SwitchPill $bg="#ebf5ea" $fg="#38961b" $gap={25}>
          결과발표 ON
          <Switch type="checkbox" role="switch" defaultChecked $track="#93c986" $thumb="#38961b" $d={38} $w={67} />
        </SwitchPill>
        <InfoButton />
        <Fold />
      </HeadActions>
    </StageHead>
    <Board>
      <CardGroup cards={[first, CRITERIA, GROUPS]} />
      <CardGroup cards={[NOTICE]} />
      <CardGroup cards={[STATUS]} />
      <CardGroup cards={[RESULT]} />
    </Board>
  </Section>
);

export default function App() {
  return (
    <Shell>
      <GlobalStyle />
      <Header>
        <LogoLink href="#" aria-label="CareerLink"><Logo /></LogoLink>
        <HeaderTools>
          <SquareButtons>
            <SquareButton type="button" aria-label="알림" $bg="#f0e9fa" $fg="#5a1fb0"><Icon name="bell" size={50} stroke={1.500} /></SquareButton>
            <SquareButton type="button" aria-label="즐겨찾기" $bg="#fff2e5" $fg="#ff8a00"><Icon name="star" size={52} stroke={2} /></SquareButton>
          </SquareButtons>
          <Session>
            <span>01:59:17</span>
            <ExtendButton type="button">로그인 연장</ExtendButton>
          </Session>
          <Account type="button">
            <Avatar>김</Avatar>
            <Caret />
          </Account>
        </HeaderTools>
      </Header>
      <Columns>
        <Sidebar>
          <NavScroll>
            <CompanyPicker>
              <SelectField id="company" label="기업 선택" value="NHR 시연용" size={35} labelSize={26} height={93} />
            </CompanyPicker>
            <NavList>
              {TOP_MENU.map((m) => (
                <li key={m.name}>
                  <NavLink href="#"><Icon name={m.icon} />{m.name}</NavLink>
                </li>
              ))}
              <NavDivider />
              <li>
                <NavButton type="button"><Icon name="list" />채용 공고 관리<Icon name="down" size={32} /></NavButton>
              </li>
              <li>
                <NavButton type="button" $active><Icon name="clipboard" />채용 전형 관리<Icon name="up" size={32} /></NavButton>
              </li>
              {SUB_MENU.map((name, i) => (
                <li key={name}><SubLink href="#" $active={i === 0}>{name}</SubLink></li>
              ))}
              {MENU.map((m) => (
                <li key={m.name}>
                  <NavButton type="button"><Icon name={m.icon} />{m.name}<Icon name="down" size={32} /></NavButton>
                </li>
              ))}
            </NavList>
          </NavScroll>
          <SidebarFoot>
            <li><NavLink href="#" $compact><Icon name="speaker" />공지사항</NavLink></li>
            <li><NavLink href="#" $compact><Icon name="help" />이용자 가이드</NavLink></li>
          </SidebarFoot>
          <CollapseButton type="button" aria-label="메뉴 접기"><Icon name="left" size={30} stroke={3} /></CollapseButton>
        </Sidebar>
        <Main>
          <Panel>
            <Toolbar>
              <Segmented>
                <Segment type="button" $on aria-pressed="true">정기</Segment>
                <Segment type="button" aria-pressed="false">상시</Segment>
              </Segmented>
              <SelectField id="status" label="공고 상태" value="전체" width={344} />
              <SelectField id="job" label="채용공고 목록" value="[커리어링크] 2024년 신입사원 채용" grow />
              <CloseJobButton type="button" $bg="#e9e9e9" $fg="#212121">채용종료</CloseJobButton>
              <FilledButton type="button" $bg="#e5f6fe" $fg="#03a9f4">
                <svg width="40" height="40" viewBox="0 0 40 40" aria-hidden="true">
                  <circle cx="20" cy="20" r="20" fill="#03a9f4" />
                  <path d="M20 11v18M11 20h18" stroke="#fff" strokeWidth="4" strokeLinecap="round" />
                </svg>
                전형 단계 추가
              </FilledButton>
            </Toolbar>
            <Sections>
              <Stage
                icon="clipboardSearch"
                title="서류전형"
                period="2024.06.19(수) 00:00 - 2024.06.22(토) 00:00"
                notice="발표 예정 : 2024.06.28(금) 00:00"
                first={SUBMITTED}
              />
              <Stage
                icon="userSearch"
                title="1차면접"
                period="2024.06.24(월) 00:00 - 2024.06.28(금) 00:00"
                notice="발표 예정 : 2024.06.29(토) 00:00"
                first={TARGETS}
              />
              <Section>
                <StageHead icon="userPentagon" title="커리어앤 인성검사 전형">
                  <Chip $bg="#ffeeee" $fg="#ff5252">기본정보를 등록해 주세요</Chip>
                  <HeadActions>
                    <Marked $inset="-5px">
                      <Beam viewBox="0 0 242 454" aria-hidden="true">
                        <defs>
                          <linearGradient id="beam" x1="0" x2="1" y1="0" y2="0">
                            <stop offset="0.1" stopColor="#3b8bff" stopOpacity="0" />
                            <stop offset="1" stopColor="#3b82ff" stopOpacity="0.34" />
                          </linearGradient>
                        </defs>
                        <path d="M0 0L242 199V294L0 454z" fill="url(#beam)" />
                      </Beam>
                      <InfoButton />
                      <Mark $left={-53} $top={-47}>c</Mark>
                      <InfoDialog />
                    </Marked>
                    <OutlineButton type="button" $edge="#bdbdbd" $fg="#757575">
                      <Icon name="trash" stroke={2} />
                      삭제
                    </OutlineButton>
                    <Fold />
                  </HeadActions>
                </StageHead>
                <Board>
                  <Marked $inset="0 -4px -6px -2px">
                    <CardGroup cards={[TARGETS]} />
                    <CardGroup cards={[NOTICE]} />
                    <Mark $left={-37} $top={-25}>d</Mark>
                  </Marked>
                  <CardGroup cards={[TEST_RESULT]} />
                </Board>
              </Section>
            </Sections>
          </Panel>
        </Main>
      </Columns>
      <ChatShade />
      <ChatButton type="button" aria-label="채팅 상담">
        <svg width="127" height="127" viewBox="2 2 127 127" aria-hidden="true">
          <path d="M65.500 31a35 35 0 0 1 35 35c0 6-1.500 11-2 16-.5 6 1 12 1 16 0 2-1 3-3 3-4 0-8-2-12-3-6 2-12 3-19 3a35 35 0 0 1 0-70z" fill="#fff" />
          <path d="M49 73q16.500 17 33 0" fill="none" stroke="#064f9d" strokeWidth="10" />
        </svg>
      </ChatButton>
    </Shell>
  );
}
